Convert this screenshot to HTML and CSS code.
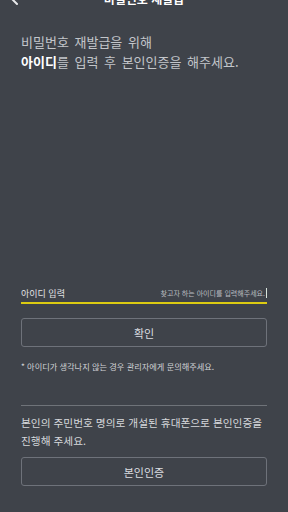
FILE: index.html
```html
<!DOCTYPE html>
<html lang="ko">
<head>
    <meta charset="UTF-8">
    <meta name="viewport" content="width=device-width, initial-scale=1.0">
    <title>비밀번호 재발급</title>
    <link rel="stylesheet" href="styles.css">
</head>
<body>
    <div class="screen">
        <div class="header">
            <svg class="back-btn" width="20" height="20" viewBox="0 0 20 20">
                <path d="M3 10 H19 M3 10 L9 4 M3 10 L9 16" fill="none" stroke="#e8e9eb" stroke-width="2" stroke-linecap="round" stroke-linejoin="round"/>
            </svg>
            <h1 class="title">비밀번호 재발급</h1>
        </div>

        <p class="intro">비밀번호 재발급을 위해<br><b>아이디</b>를 입력 후 본인인증을 해주세요.</p>

        <div class="field">
            <span class="field-label">아이디 입력</span>
            <span class="field-hint">찾고자 하는 아이디를 입력해주세요.<span class="caret"></span></span>
        </div>
        <button class="outline-btn confirm-btn">확인</button>
        <p class="note">* 아이디가 생각나지 않는 경우 관리자에게 문의해주세요.</p>

        <div class="divider"></div>

        <p class="verify-text">본인의 주민번호 명의로 개설된 휴대폰으로 본인인증을<br>진행해 주세요.</p>
        <button class="outline-btn verify-btn">본인인증</button>
    </div>
</body>
</html>
```

FILE: styles.css
```css
html, body {
    margin: 0;
    height: 100%;
    background-color: #3f434a;
    overflow: hidden;
}
body {
    font-family: 'Noto Sans CJK KR', 'Noto Sans', sans-serif;
    color: #d6d8db;
}
.screen {
    display: flex;
    flex-direction: column;
    padding: 0 21px;
}
.header {
    display: flex;
    align-items: center;
    height: 40px;
    margin: -22px -21px 0;
    padding-left: 8px;
}
.back-btn {
    flex: none;
}
.title {
    flex: 1;
    margin: 0 28px 0 0;
    text-align: center;
    font-size: 12px;
    font-weight: bold;
    color: #fff;
}
.intro {
    margin: 14px 0 0;
    font-size: 13px;
    line-height: 20px;
    word-spacing: 2px;
    color: #c3c6ca;
}
.intro b {
    color: #fff;
}
.field {
    display: flex;
    justify-content: space-between;
    align-items: center;
    height: 18px;
    margin-top: 212px;
    border-bottom: 2px solid #dccb12;
}
.field-label {
    font-size: 9px;
    color: #e1e2e4;
}
.field-hint {
    display: flex;
    align-items: center;
    font-size: 7px;
    color: #b9bcc0;
}
.caret {
    width: 1px;
    height: 10px;
    margin-left: 1px;
    background-color: #d8e4dc;
}
.outline-btn {
    display: block;
    width: 100%;
    box-sizing: border-box;
    height: 29px;
    padding: 0;
    background: none;
    border: 1px solid #6e727a;
    border-radius: 3px;
    font-family: inherit;
    color: #dcdee1;
}
.confirm-btn {
    margin-top: 14px;
    font-size: 11px;
}
.note {
    margin: 13px 0 0;
    font-size: 8.2px;
    line-height: 12px;
    color: #d0d2d5;
}
.divider {
    height: 1px;
    margin-top: 33px;
    background-color: #6f7379;
}
.verify-text {
    margin: 8px 0 0;
    font-size: 10.7px;
    line-height: 17.5px;
    color: #d6d8db;
}
.verify-btn {
    margin-top: 8px;
    font-size: 11px;
}
```
